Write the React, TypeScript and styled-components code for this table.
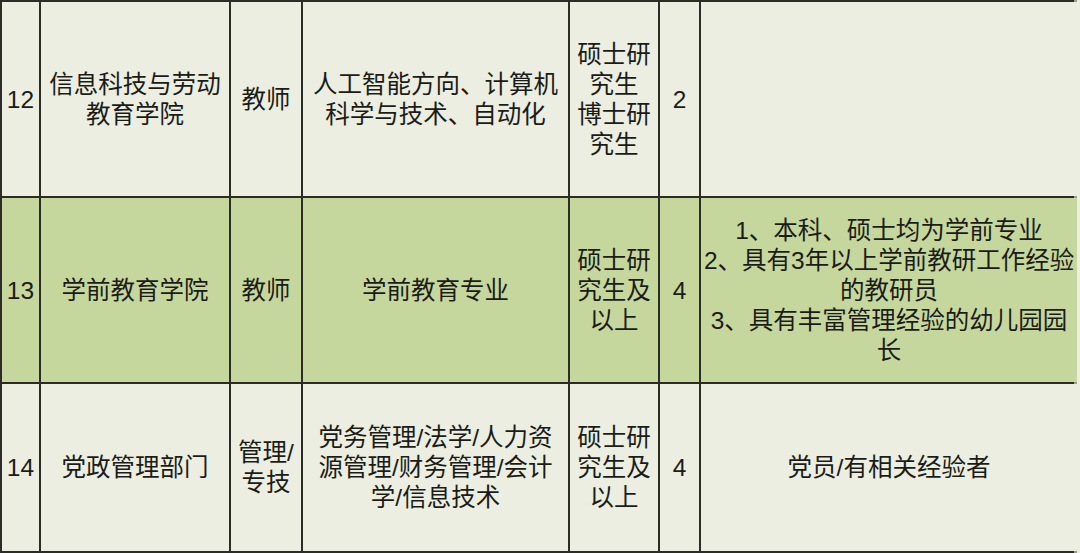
import React from "react";
import styled, { createGlobalStyle } from "styled-components";

const Global = createGlobalStyle`
  html, body { margin: 0; padding: 0; background: #ebeee0; }
  body { width: 1080px; height: 553px; overflow: hidden; }
`;

const Table = styled.div`
  display: grid;
  grid-template-columns: 37px 188px 70px 265px 88px 39px 376px;
  grid-template-rows: 194px 184px 167px;
  gap: 2px;
  padding: 2px 0 2px 2px;
  border-right: 3px solid #9a9d92;
  background: #2a2c25;
  width: 1077px;
  height: 553px;
  box-sizing: border-box;
  font-family: "Liberation Sans", "Noto Sans CJK SC", sans-serif;
  font-size: 24.5px;
  line-height: 30px;
  color: #1b1c18;
`;

const Cell = styled.div<{ $tone: "light" | "green" }>`
  display: flex;
  align-items: center;
  justify-content: center;
  text-align: center;
  background: ${(p) => (p.$tone === "green" ? "#c6d79e" : "#ebeee0")};
  padding: 1px 0 0;
  white-space: nowrap;
`;

const Lines = styled.div`
  display: flex;
  flex-direction: column;
  align-items: center;
`;

type Row = {
  tone: "light" | "green";
  cells: string[][];
};

const rows: Row[] = [
  {
    tone: "light",
    cells: [
      ["12"],
      ["信息科技与劳动", "教育学院"],
      ["教师"],
      ["人工智能方向、计算机", "科学与技术、自动化"],
      ["硕士研", "究生", "博士研", "究生"],
      ["2"],
      [],
    ],
  },
  {
    tone: "green",
    cells: [
      ["13"],
      ["学前教育学院"],
      ["教师"],
      ["学前教育专业"],
      ["硕士研", "究生及", "以上"],
      ["4"],
      [
        "1、本科、硕士均为学前专业",
        "2、具有3年以上学前教研工作经验",
        "的教研员",
        "3、具有丰富管理经验的幼儿园园",
        "长",
      ],
    ],
  },
  {
    tone: "light",
    cells: [
      ["14"],
      ["党政管理部门"],
      ["管理/", "专技"],
      ["党务管理/法学/人力资", "源管理/财务管理/会计", "学/信息技术"],
      ["硕士研", "究生及", "以上"],
      ["4"],
      ["党员/有相关经验者"],
    ],
  },
];

export default function App() {
  return (
    <>
      <Global />
      <Table>
        {rows.map((row, ri) =>
          row.cells.map((lines, ci) => (
            <Cell key={`${ri}-${ci}`} $tone={row.tone}>
              <Lines>
                {lines.map((l, li) => (
                  <span key={li}>{l}</span>
                ))}
              </Lines>
            </Cell>
          ))
        )}
      </Table>
    </>
  );
}
